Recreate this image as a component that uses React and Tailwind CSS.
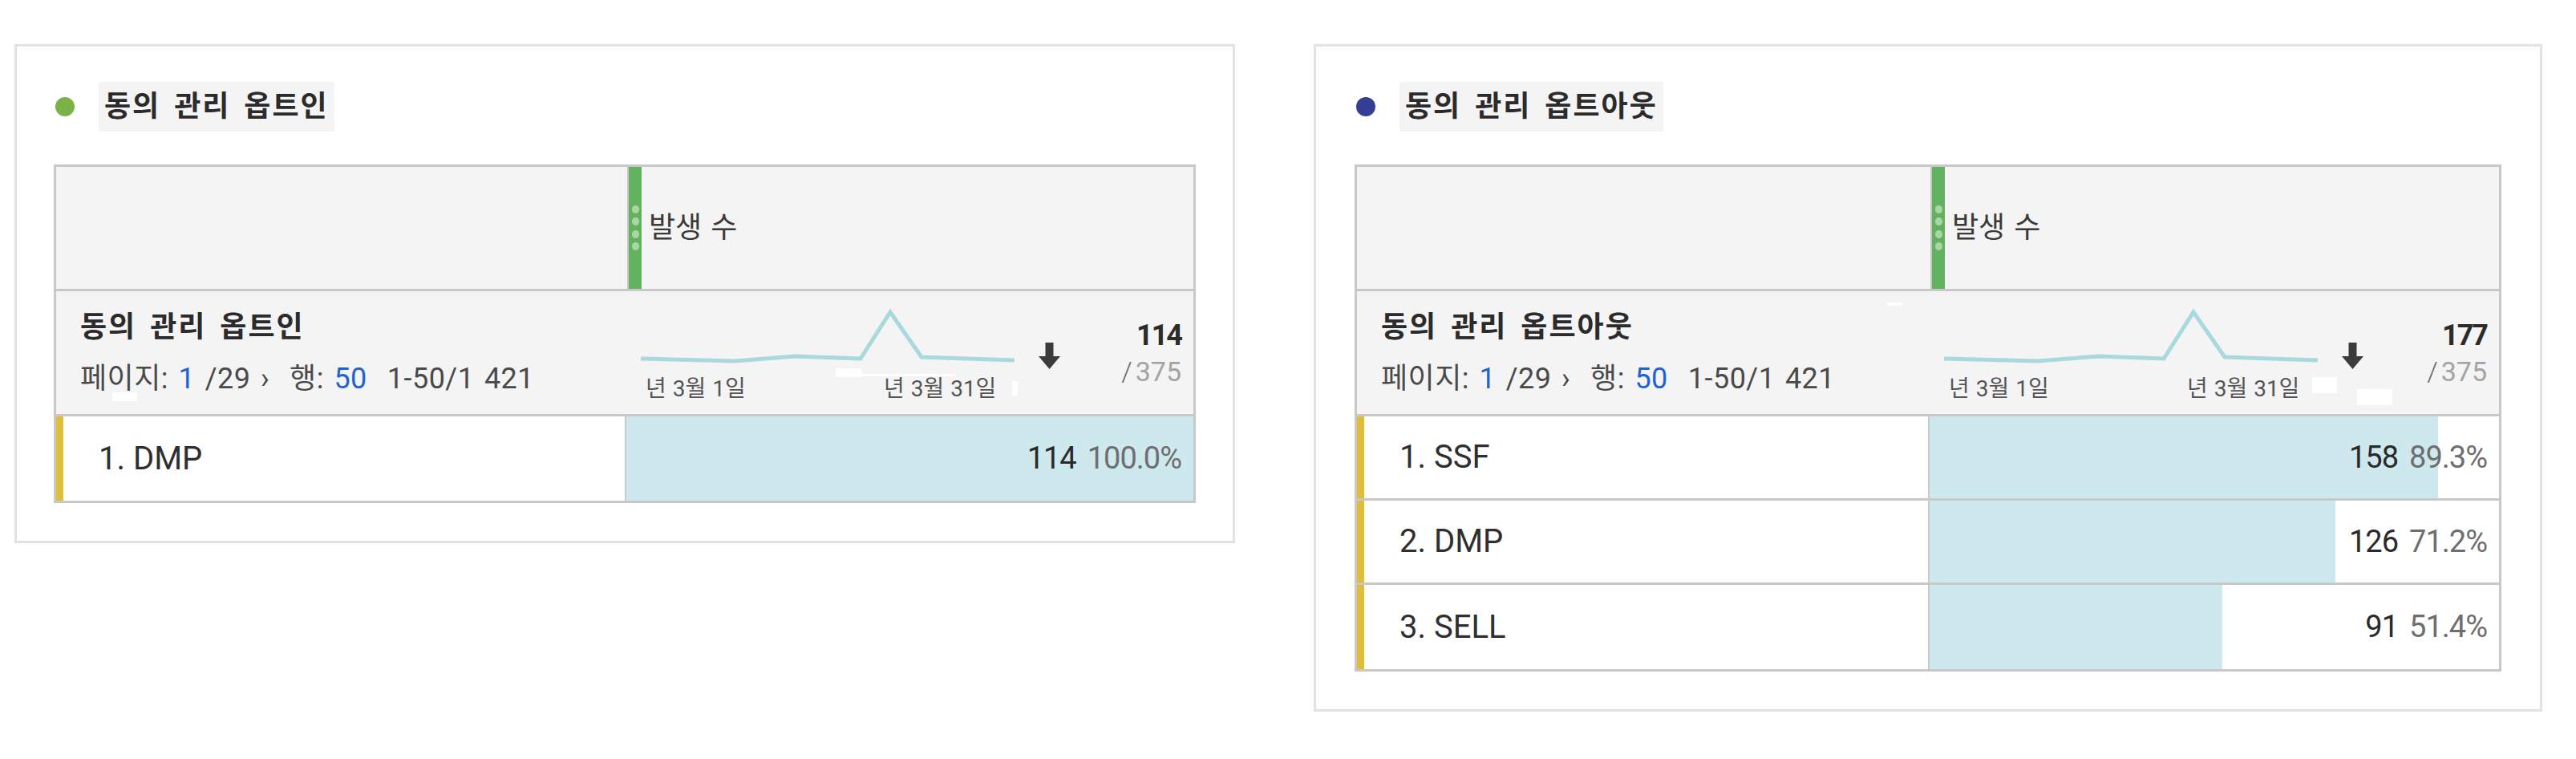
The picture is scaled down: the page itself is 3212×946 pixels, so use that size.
import React from 'react';

const SPARK = '0,65 117,68 193,62 274,65 311,7 350,63 466,67';

function Sparkline() {
  return (
    <svg width="466" height="75" viewBox="0 0 466 75" className="block overflow-visible">
      <polyline points={SPARK} fill="none" stroke="#a9d8dd" strokeWidth="5" strokeLinejoin="miter" />
    </svg>
  );
}

function DownArrow() {
  return (
    <svg width="27" height="33" viewBox="0 0 27 33" className="block">
      <rect x="8.5" y="0" width="10" height="19" fill="#3b3b3b" />
      <polygon points="0,17 27,17 13.5,33" fill="#3b3b3b" />
    </svg>
  );
}

function Patch({ className }) {
  return <div className={'absolute bg-white ' + className} />;
}

function ReportCard({ width, padX, dotColor, title, total, rows, leftPatches, rightPatches }) {
  return (
    <div className={`${width} ${padX} border-[3px] border-[#e2e2e2] bg-white pt-[44px] pb-[47px]`}>
      {/* title */}
      <div className="flex items-center">
        <div className="ml-[2px] h-[24px] w-[24px] rounded-full" style={{ backgroundColor: dotColor }} />
        <div className="ml-[30px] flex h-[62px] items-center bg-[#f4f4f4] px-[7px]">
          <span className="text-[36px] font-bold leading-none tracking-[2px] text-[#2b2b2b] [word-spacing:6px]">{title}</span>
        </div>
      </div>

      {/* table */}
      <div className="mt-[41px] border-[3px] border-[#c8c8c8]">
        {/* header */}
        <div className="grid h-[155px] grid-cols-2 border-b-[3px] border-[#c8c8c8] bg-[#f4f4f4]">
          <div />
          <div className="flex items-stretch">
            <div className="ml-[3px] w-[2px] bg-[#c6c6c6]" />
            <div className="flex w-[16px] flex-col items-center justify-center gap-[5.5px] bg-[#62b15e]">
              <span className="h-[10px] w-[9px] rounded-full bg-[#a9d6a4]" />
              <span className="h-[10px] w-[9px] rounded-full bg-[#a9d6a4]" />
              <span className="h-[10px] w-[9px] rounded-full bg-[#a9d6a4]" />
              <span className="h-[10px] w-[9px] rounded-full bg-[#a9d6a4]" />
            </div>
            <div className="flex items-center pl-[9px] text-[36px] leading-none text-[#3a3a3a] [word-spacing:2px]">
              발생 수
            </div>
          </div>
        </div>

        {/* summary */}
        <div className="grid h-[156px] grid-cols-2 border-b-[3px] border-[#c8c8c8] bg-[#f4f4f4]">
          <div className="relative flex flex-col justify-center gap-[24px] pl-[30px]">
            <div className="text-[36px] font-bold leading-[40px] tracking-[2px] text-[#2b2b2b] [word-spacing:6px]">{title}</div>
            <div className="whitespace-pre text-[36px] leading-[40px] tracking-[0.5px] text-[#4a4a4a] [word-spacing:3px]">
              페이지: <span className="text-[#1e63d6]">1</span> /29 {'\u203A'}  행: <span className="text-[#1e63d6]">50</span>  1-50/1 421
            </div>
            {leftPatches}
          </div>
          <div className="relative flex items-start pl-[20px] pr-[15px] pt-[19px]">
            <div className="flex flex-col">
              <Sparkline />
              <div className="mt-[12px] flex text-[28px] leading-[32px] text-[#555555] [word-spacing:1px]">
                <span className="w-[303px] pl-[6px]">년 3월 1일</span>
                <span>년 3월 31일</span>
              </div>
            </div>
            <div className="ml-[30px] mt-[45px]">
              <DownArrow />
            </div>
            <div className="flex flex-1 flex-col items-end pt-[16px]">
              <span className="text-[36px] font-bold leading-[40px] tracking-[-2px] text-[#2b2b2b]">{total}</span>
              <span className="mt-[5px] text-[34px] leading-[40px] text-[#a3a3a3]">
                <span className="mr-[4px] font-light text-[#6b6b6b]">/</span>375
              </span>
            </div>
            {rightPatches}
          </div>
        </div>

        {/* rows */}
        {rows.map((r, i) => (
          <div
            key={r.label}
            className={`grid h-[105px] grid-cols-2 bg-white ${i < rows.length - 1 ? 'border-b-[3px] border-[#c8c8c8]' : ''}`}
          >
            <div className="flex items-center border-l-[9px] border-[#dfbe3c] pl-[44px] text-[40px] text-[#2f2f2f]">
              {r.label}
            </div>
            <div className="relative flex items-center justify-end border-l-[2px] border-[#c8c8c8] pr-[15px]">
              <div className="absolute inset-y-0 left-0 bg-[#cde9ee]" style={{ width: r.pct + '%' }} />
              <span className="relative text-[38px] tracking-[-1px] text-[#2a2a2a]">{r.count}</span>
              <span className="relative ml-[14px] text-[38px] tracking-[-1px] text-[#6e6e6e]">{r.pct.toFixed(1)}%</span>
            </div>
          </div>
        ))}
      </div>
    </div>
  );
}

export default function App() {
  return (
    <div className="min-h-[946px] bg-white font-[Roboto,'Noto_Sans_CJK_KR',sans-serif]">
      <div className="flex items-start gap-[98px] pl-[18px] pt-[55px]">
        <ReportCard
          width="w-[1522px]"
          padX="px-[46px]"
          dotColor="#7ab247"
          title="동의 관리 옵트인"
          total="114"
          rows={[{ label: '1. DMP', count: 114, pct: 100 }]}
          leftPatches={<Patch className="left-[70px] top-[126px] h-[11px] w-[31px]" />}
          rightPatches={
            <>
              <Patch className="left-[263px] top-[96px] h-[11px] w-[32px]" />
              <Patch className="left-[263px] top-[103px] h-[3px] w-[150px]" />
              <Patch className="left-[483px] top-[112px] h-[18px] w-[7px]" />
            </>
          }
        />
        <ReportCard
          width="w-[1532px]"
          padX="px-[48px]"
          dotColor="#343e94"
          title="동의 관리 옵트아웃"
          total="177"
          rows={[
            { label: '1. SSF', count: 158, pct: 89.3 },
            { label: '2. DMP', count: 126, pct: 71.2 },
            { label: '3. SELL', count: 91, pct: 51.4 },
          ]}
          leftPatches={<Patch className="left-[661px] top-[14px] h-[4px] w-[19px]" />}
          rightPatches={
            <>
              <Patch className="left-[479px] top-[107px] h-[20px] w-[31px]" />
              <Patch className="left-[535px] top-[122px] h-[20px] w-[44px]" />
            </>
          }
        />
      </div>
    </div>
  );
}
